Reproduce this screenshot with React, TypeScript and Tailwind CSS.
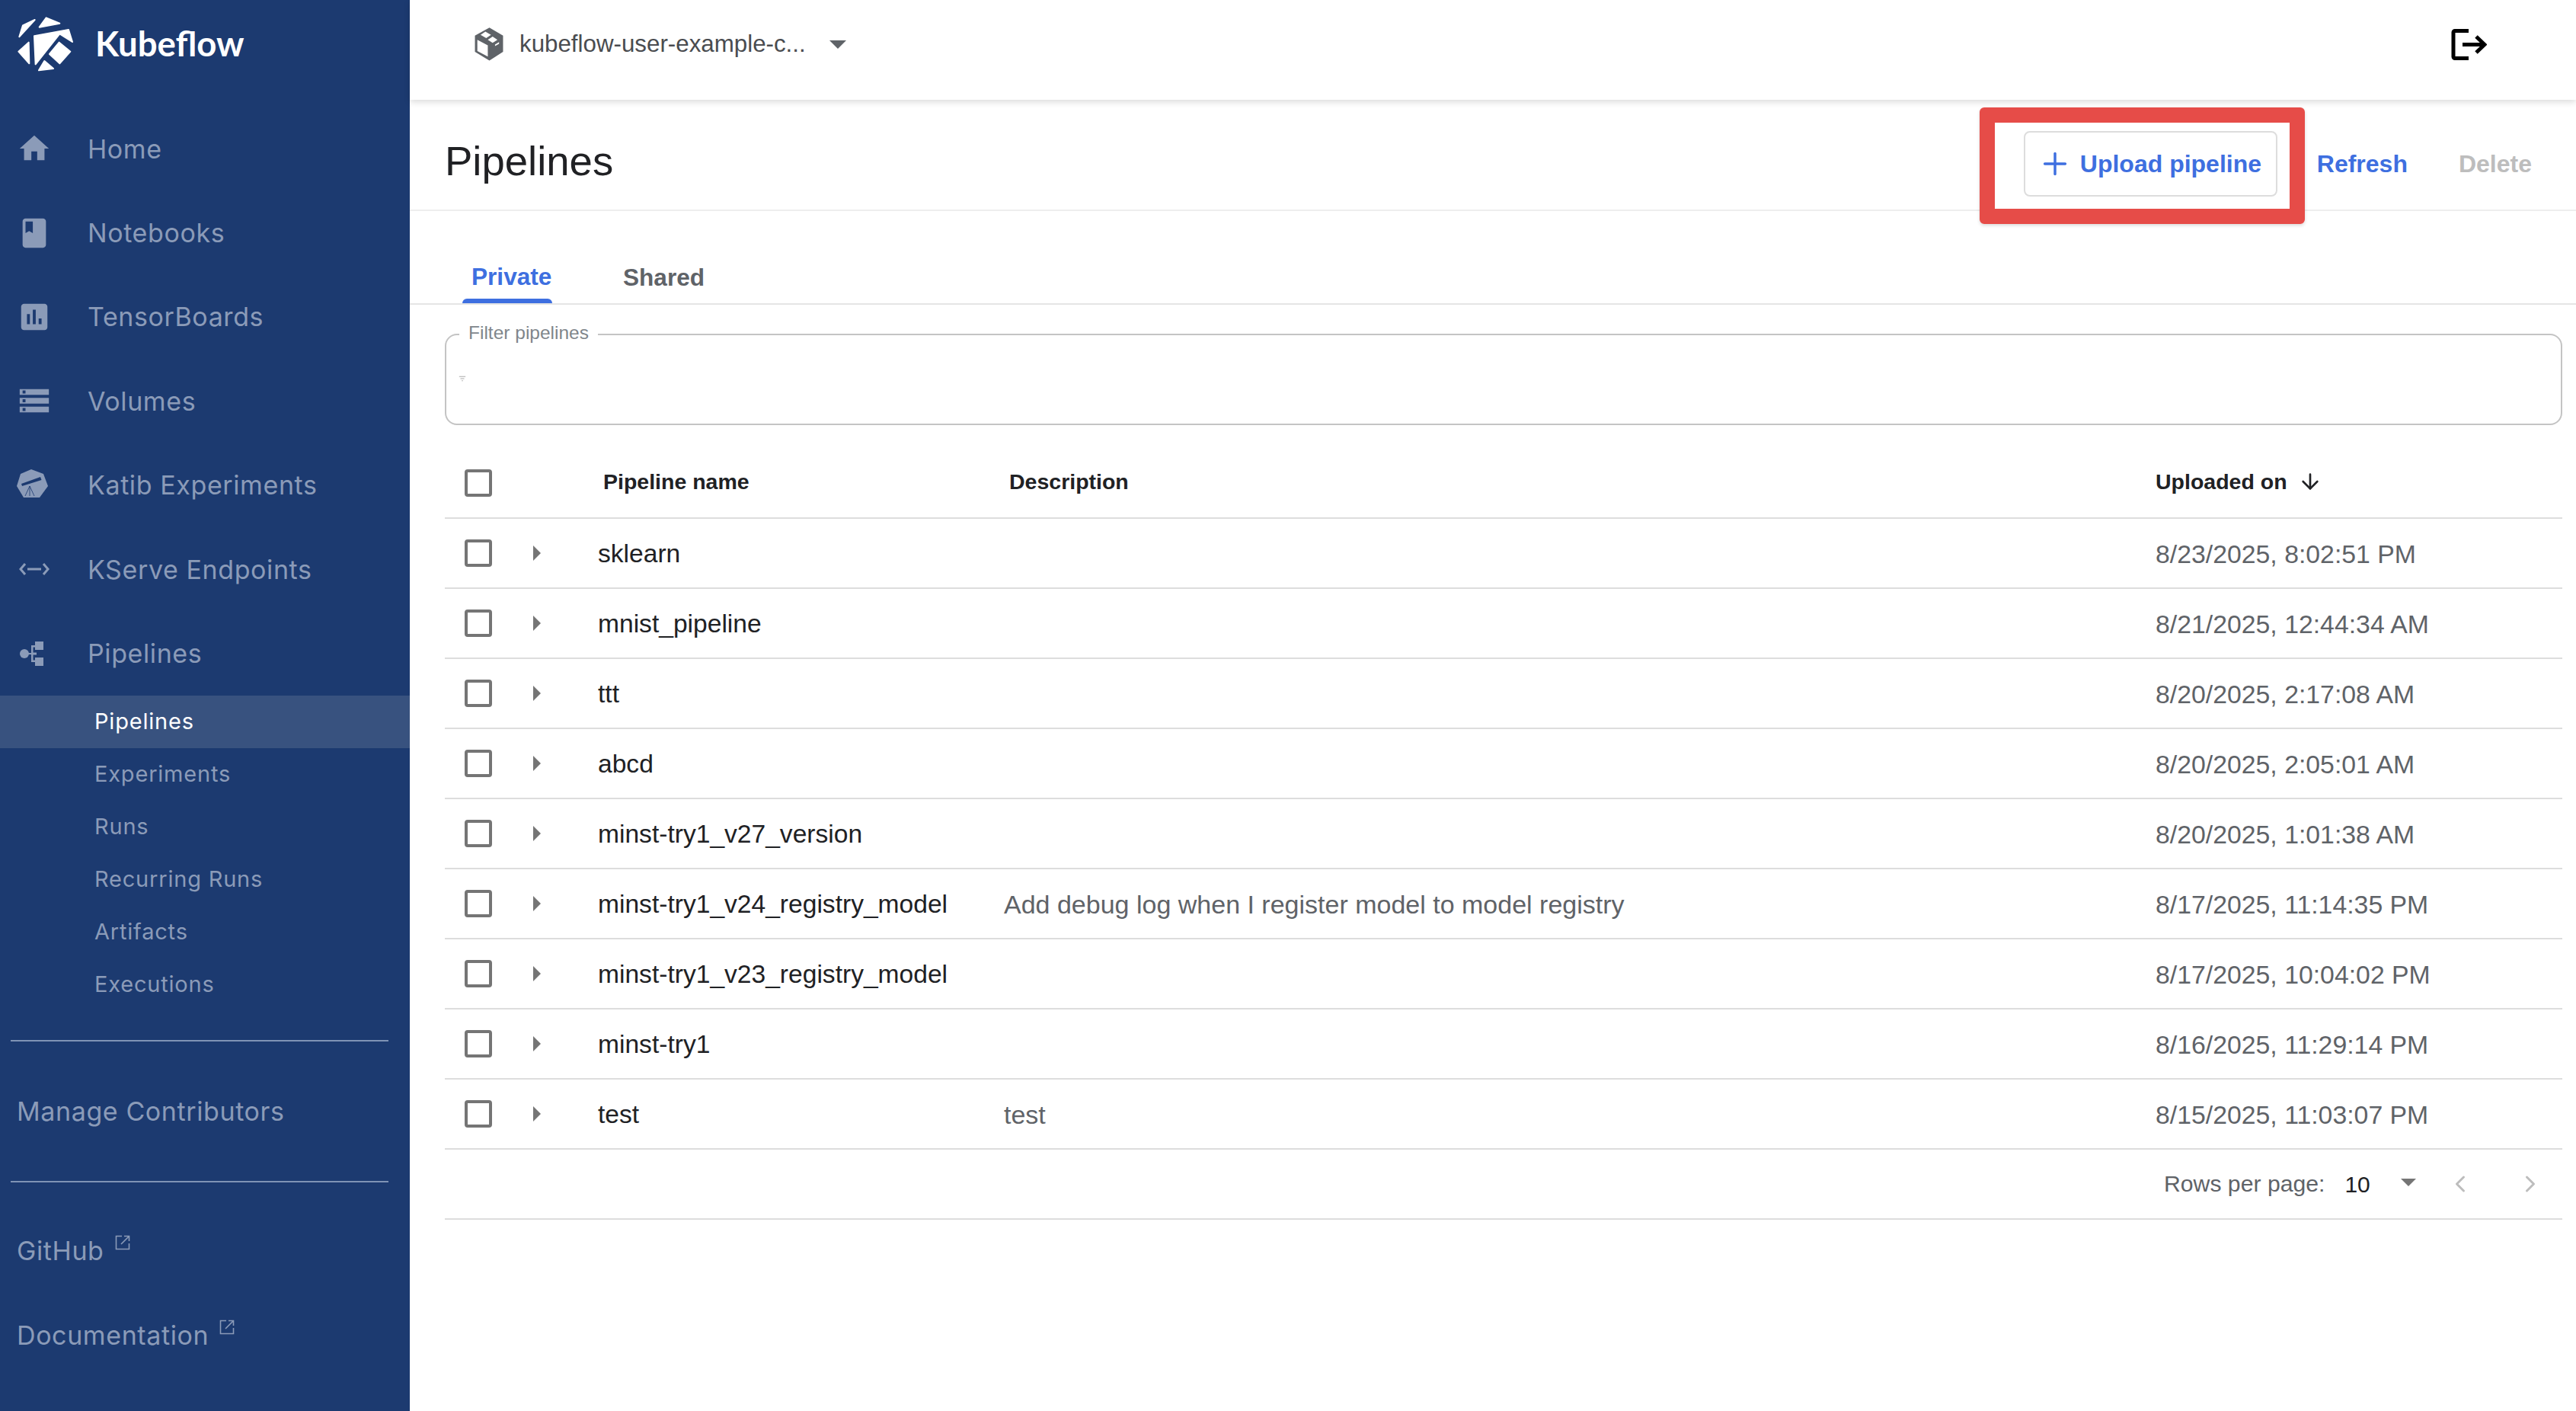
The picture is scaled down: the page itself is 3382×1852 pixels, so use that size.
import React from 'react';
import { ArrowDown, ChevronLeft, ChevronRight, Plus } from 'lucide-react';

const MuiIcon: React.FC<{ d: string }> = ({ d }) => (
  <svg viewBox="0 0 24 24" className="h-[46px] w-[46px] fill-current">
    <path d={d} />
  </svg>
);

const KubeflowLogo = () => (
  <svg viewBox="0 0 270 255" className="h-[85px] w-[90px] fill-white stroke-white stroke-[6px]" strokeLinejoin="round">
    <polygon points="92,33 45,55 31,100" />
    <polygon points="137,25 190,47 110,62" />
    <polygon points="90,97 225,72 240,120 190,88 95,208" />
    <polygon points="188,122 232,158 190,205 150,168" />
    <polygon points="68,122 70,205 28,158" />
    <polygon points="130,195 165,225 108,232" />
  </svg>
);

const KatibIcon = () => (
  <svg viewBox="0 0 60 60" className="ml-[-7px] h-[60px] w-[60px]">
    <polygon points="26,9 42,15 48,31 37,46 16,46 7,31 12,15" className="fill-current" />
    <polygon points="13,28 38,19 39.5,23 14,31" fill="#1c3a70" />
    <path d="M24 31 L18 44 M24 31 V44 M24 31 L30 44" stroke="#1c3a70" strokeWidth="0.8" fill="none" />
  </svg>
);

const KServeIcon = () => (
  <svg viewBox="0 0 46 24" className="h-[24px] w-[46px] fill-none stroke-current stroke-[3px]">
    <path d="M11 5 L5 12 L11 19 M14 12 H32 M35 5 L41 12 L35 19" />
  </svg>
);

const PipelinesIcon = () => (
  <svg viewBox="0 0 46 46" className="h-[46px] w-[46px] fill-current">
    <circle cx="10" cy="23" r="6" />
    <rect x="24" y="7" width="11" height="11" />
    <rect x="24" y="28" width="11" height="11" />
    <path d="M10 22 H19 V12 H26 V14.5 H21.5 V21.5 H26 V24.5 H21.5 V31.5 H26 V34 H19 V24 H10 Z" />
  </svg>
);

const ExternalIcon = () => (
  <svg viewBox="0 0 20 20" className="mb-[20px] ml-[14px] h-[20px] w-[20px] fill-none stroke-current stroke-[1.6px]">
    <path d="M9 1.5 H1.5 V18.5 H18.5 V11 M8 12 L18 2 M12 1.5 H18.5 V8" />
  </svg>
);

const LogoutIcon = () => (
  <svg viewBox="0 0 47 41" className="h-[41px] w-[47px] fill-none stroke-black stroke-[5px]">
    <path d="M23 2.5H5a2 2 0 0 0-2 2V36.5a2 2 0 0 0 2 2H23" />
    <path d="M15 20.5H44M33 10L44 20.5L33 31" />
  </svg>
);

const navItems: { label: string; icon: React.ReactNode }[] = [
  { label: 'Home', icon: <MuiIcon d="M10 20v-6h4v6h5v-8h3L12 3 2 12h3v8z" /> },
  { label: 'Notebooks', icon: <MuiIcon d="M18 2H6c-1.1 0-2 .9-2 2v16c0 1.1.9 2 2 2h12c1.1 0 2-.9 2-2V4c0-1.1-.9-2-2-2zM6 4h5v8l-2.5-1.5L6 12V4z" /> },
  { label: 'TensorBoards', icon: <MuiIcon d="M19 3H5c-1.1 0-2 .9-2 2v14c0 1.1.9 2 2 2h14c1.1 0 2-.9 2-2V5c0-1.1-.9-2-2-2zM9 17H7v-7h2v7zm4 0h-2V7h2v10zm4 0h-2v-4h2v4z" /> },
  { label: 'Volumes', icon: <MuiIcon d="M2 20h20v-4H2v4zm2-3h2v2H4v-2zM2 4v4h20V4H2zm4 3H4V5h2v2zm-4 7h20v-4H2v4zm2-3h2v2H4v-2z" /> },
  { label: 'Katib Experiments', icon: <KatibIcon /> },
  { label: 'KServe Endpoints', icon: <KServeIcon /> },
  { label: 'Pipelines', icon: <PipelinesIcon /> },
];

const subItems = ['Pipelines', 'Experiments', 'Runs', 'Recurring Runs', 'Artifacts', 'Executions'];

const pipelines = [
  { name: 'sklearn', description: '', uploaded: '8/23/2025, 8:02:51 PM' },
  { name: 'mnist_pipeline', description: '', uploaded: '8/21/2025, 12:44:34 AM' },
  { name: 'ttt', description: '', uploaded: '8/20/2025, 2:17:08 AM' },
  { name: 'abcd', description: '', uploaded: '8/20/2025, 2:05:01 AM' },
  { name: 'minst-try1_v27_version', description: '', uploaded: '8/20/2025, 1:01:38 AM' },
  { name: 'minst-try1_v24_registry_model', description: 'Add debug log when I register model to model registry', uploaded: '8/17/2025, 11:14:35 PM' },
  { name: 'minst-try1_v23_registry_model', description: '', uploaded: '8/17/2025, 10:04:02 PM' },
  { name: 'minst-try1', description: '', uploaded: '8/16/2025, 11:29:14 PM' },
  { name: 'test', description: 'test', uploaded: '8/15/2025, 11:03:07 PM' },
];

const Checkbox = () => <div className="h-[36px] w-[36px] rounded-[4px] border-[4px] border-[#757575]" />;

const Sidebar = () => (
  <aside className="flex h-[1852px] w-[538px] shrink-0 flex-col bg-[#1c3a70] font-['Inter',sans-serif] text-[34px] tracking-[0.6px] text-[#8b9bb8]">
    <div className="flex h-[140px] items-start pl-[15px] pt-[15px]">
      <KubeflowLogo />
      <span className="ml-[20px] mt-[12px] font-['Lato',sans-serif] text-[45.5px] font-bold leading-[60px] tracking-normal text-white">Kubeflow</span>
    </div>
    {navItems.map((item) => (
      <div key={item.label} className="flex h-[110.4px] items-center">
        <span className="flex w-[115px] justify-start pl-[22px]">{item.icon}</span>
        <span>{item.label}</span>
      </div>
    ))}
    <div className="flex flex-col text-[29px] tracking-[0.8px]">
      {subItems.map((item, i) => (
        <div key={item} className={`flex h-[69px] items-center pl-[124px] ${i === 0 ? 'bg-[#38527f] text-white' : ''}`}>
          {item}
        </div>
      ))}
    </div>
    <div className="ml-[14px] mr-[28px] mt-[38px] h-[2px] bg-[#7f93b5]" />
    <div className="flex h-[183px] items-center pl-[22px]">Manage Contributors</div>
    <div className="ml-[14px] mr-[28px] h-[2px] bg-[#7f93b5]" />
    <div className="mt-[34px] flex h-[111px] items-center pl-[22px]">
      GitHub
      <ExternalIcon />
    </div>
    <div className="flex h-[111px] items-center pl-[22px]">
      Documentation
      <ExternalIcon />
    </div>
  </aside>
);

const TopBar = () => (
  <header className="relative z-10 flex h-[131px] items-center justify-between bg-white pb-[14px] pl-[75px] pr-[117px] shadow-[0_3px_8px_rgba(0,0,0,0.14)]">
    <div className="flex items-center text-[31.3px] text-[#4a4c50]">
      <svg viewBox="0 0 55 55" className="h-[58px] w-[58px]">
        <polygon points="28,6 45,16 45,36 28,47 10,36 10,16" fill="#5f6368" />
        <polygon points="13,21 26,28 26,42 13,35" fill="#fff" />
        <polygon points="17,15 23,11 30,15 24,19" fill="#fff" />
        <polygon points="26,21 32,17 38,21 32,25" fill="#fff" />
        <polygon points="35,27 40,24 40,26 35,29" fill="#fff" />
      </svg>
      <span className="ml-[11px]">kubeflow-user-example-c...</span>
      <span className="ml-[31px] h-0 w-0 border-x-[11.5px] border-t-[11px] border-x-transparent border-t-[#5f6368]" />
    </div>
    <LogoutIcon />
  </header>
);

const Toolbar = () => (
  <div className="flex h-[146px] items-center justify-between border-b-2 border-[#eeeeee] pl-[46px] pr-[58px] pt-[18px]">
    <h1 className="text-[54.5px] text-[#202124]">Pipelines</h1>
    <div className="relative mt-[6px] flex items-center text-[32px] font-bold text-[#3e6fe0]">
      <button className="flex h-[86px] w-[333px] items-center rounded-[8px] border-2 border-[#dddddd] pl-[16px]">
        <Plus className="h-[46px] w-[46px]" strokeWidth={1.8} />
        <span className="ml-[10px]">Upload pipeline</span>
      </button>
      <span className="ml-[52px]">Refresh</span>
      <span className="ml-[67px] text-[#bdbdbd]">Delete</span>
      <div className="absolute left-[-58px] top-[-31px] h-[153px] w-[427px] rounded-[6px] border-[20px] border-[#e64c48] shadow-[0_2px_4px_rgba(0,0,0,0.15)]" />
    </div>
  </div>
);

const Tabs = () => (
  <div className="flex h-[123px] items-end border-b-2 border-[#e5e5e5] pl-[69px] text-[31.6px] font-bold">
    <div className="flex h-[116px] w-[118px] flex-col items-end justify-between text-[#3e6fe0]">
      <span className="mt-[58px] w-[106px]">Private</span>
      <span className="h-[6px] w-[118px] rounded-t-[6px] bg-[#3e6fe0]" />
    </div>
    <span className="mb-[10px] ml-[93px] text-[#5f6368]">Shared</span>
  </div>
);

const FilterBox = () => (
  <div className="relative ml-[46px] mr-[18px] mt-[38px] flex h-[120px] items-center rounded-[16px] border-2 border-[#c4c4c4] pl-[16px]">
    <span className="absolute left-[17px] top-[-19px] bg-white px-[12px] text-[24.5px] leading-[32px] text-[#80868b]">Filter pipelines</span>
    <svg viewBox="0 0 12 12" className="mt-[-2px] h-[10px] w-[10px] fill-[#aaaaaa]">
      <path d="M1 2h10v1.4H1zM3 5.3h6v1.4H3zM5 8.6h2V10H5z" />
    </svg>
  </div>
);

const PipelineTable = () => (
  <div className="ml-[46px] mr-[18px] mt-[31px]">
    <div className="grid h-[92px] grid-cols-[201px_533px_1512px_1fr] items-center border-b-2 border-[#dddddd] text-[28.5px] font-bold text-[#202124]">
      <div className="pl-[26px]">
        <Checkbox />
      </div>
      <div className="mt-[-4px] pl-[7px]">Pipeline name</div>
      <div className="mt-[-4px] pl-[7px]">Description</div>
      <div className="mt-[-4px] flex items-center">
        Uploaded on
        <ArrowDown className="ml-[14px] h-[32px] w-[32px]" strokeWidth={2} />
      </div>
    </div>
    {pipelines.map((p) => (
      <div key={p.name} className="grid h-[92px] grid-cols-[201px_533px_1512px_1fr] items-center border-b-2 border-[#dddddd] text-[33.6px]">
        <div className="flex items-center pl-[26px]">
          <Checkbox />
          <span className="ml-[54px] h-0 w-0 border-y-[10px] border-l-[10px] border-y-transparent border-l-[#757575]" />
        </div>
        <div className="pt-[2px] text-[#202124]">{p.name}</div>
        <div className="pt-[2px] text-[34px] text-[#5f6368]">{p.description}</div>
        <div className="pt-[2px] text-[33.8px] text-[#5f6368]">{p.uploaded}</div>
      </div>
    ))}
    <div className="flex h-[92px] items-center border-b-2 border-[#dddddd] pl-[2257px]">
      <span className="text-[30.2px] text-[#5f6368]">Rows per page:</span>
      <span className="ml-[26px] text-[30px] text-[#202124]">10</span>
      <span className="mb-[4px] ml-[40px] h-0 w-0 border-x-[10px] border-t-[10px] border-x-transparent border-t-[#757575]" />
      <ChevronLeft className="ml-[40px] h-[36px] w-[36px] text-[#bdbdbd]" strokeWidth={2} />
      <ChevronRight className="ml-[56px] h-[36px] w-[36px] text-[#bdbdbd]" strokeWidth={2} />
    </div>
  </div>
);

const App: React.FC = () => (
  <div className="flex h-[1852px] overflow-hidden bg-white">
    <Sidebar />
    <main className="min-w-0 flex-1 font-['Liberation_Sans',Arial,sans-serif]">
      <TopBar />
      <Toolbar />
      <Tabs />
      <FilterBox />
      <PipelineTable />
    </main>
  </div>
);

export default App;
